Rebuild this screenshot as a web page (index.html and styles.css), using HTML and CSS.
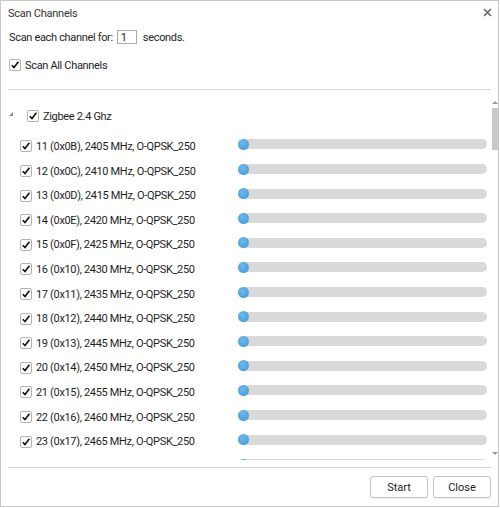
FILE: index.html
```html
<!DOCTYPE html>
<html lang="en">
  <head>
    <meta charset="UTF-8" />
    <meta name="viewport" content="width=device-width, initial-scale=1.0" />
    <title>Scan Channels</title>
    <link rel="stylesheet" href="styles.css">
  </head>
  <body>
    <div class="dialog">
      <div class="title-bar">
        <span class="title">Scan Channels</span>
        <svg class="close" width="9" height="9" viewBox="0 0 9 9">
          <path d="M1 1 L8 8 M8 1 L1 8" stroke="#666" stroke-width="1.6" />
        </svg>
      </div>

      <div class="options">
        <div class="opt-row">
          <span>Scan each channel for:</span>
          <input class="secs" type="text" value="1" />
          <span>seconds.</span>
        </div>
        <div class="opt-row opt-all">
          <span class="cb"><svg width="10" height="10" viewBox="0 0 10 10"><path d="M1.8 5.2 L4 7.6 L8.4 1.8" /></svg></span>
          <span>Scan All Channels</span>
        </div>
      </div>

      <div class="divider"></div>

      <div class="tree">
        <div class="tree-content">
          <div class="group-row">
            <span class="expander"></span>
            <span class="cb"><svg width="10" height="10" viewBox="0 0 10 10"><path d="M1.8 5.2 L4 7.6 L8.4 1.8" /></svg></span>
            <span>Zigbee 2.4 Ghz</span>
          </div>
          <div class="channels" id="channels"></div>
        </div>
        <div class="scrollbar">
          <span class="arrow up"></span>
          <span class="thumb"></span>
          <span class="track"></span>
          <span class="arrow down"></span>
        </div>
      </div>

      <div class="divider footer-line"></div>

      <div class="footer">
        <button class="btn">Start</button>
        <button class="btn">Close</button>
      </div>
    </div>

    <script>
      const list = document.getElementById("channels");
      const check = '<span class="cb"><svg width="10" height="10" viewBox="0 0 10 10"><path d="M1.8 5.2 L4 7.6 L8.4 1.8" /></svg></span>';

      // only the rows that show; the rest sit below the fold
      for (let ch = 11; ch <= 24; ch++) {
        const hex = "0x" + ch.toString(16).toUpperCase().padStart(2, "0");
        const mhz = 2405 + (ch - 11) * 5;
        const row = document.createElement("div");
        row.className = "ch-row";
        row.innerHTML =
          check +
          '<span class="ch-label">' + ch + " (" + hex + "), " + mhz + " MHz, O-QPSK_250</span>" +
          '<span class="bar"><span class="knob"></span></span>';
        list.appendChild(row);
      }
    </script>
  </body>
</html>
```

FILE: styles.css
```css
body {
  margin: 0;
  font-family: Roboto, "Liberation Sans", sans-serif;
  font-size: 11px;
  letter-spacing: -0.33px;
  color: #1e1e1e;
  background: #fff;
}

.dialog {
  width: 499px;
  height: 507px;
  box-sizing: border-box;
  border: 1px solid #c9c9c9;
  display: flex;
  flex-direction: column;
  overflow: hidden;
}

.title-bar {
  height: 24px;
  display: flex;
  align-items: center;
  justify-content: space-between;
  padding: 0 6px 0 7px;
  flex-shrink: 0;
}

.title {
  color: #333;
  letter-spacing: -0.25px;
}

.close {
  margin-top: -1px;
}

.options {
  padding: 0 8px 0 8px;
  flex-shrink: 0;
}

.opt-row {
  height: 24px;
  display: flex;
  align-items: center;
}

.opt-all {
  margin-top: 4px;
}

.opt-all .cb {
  margin-right: 4px;
}

.secs {
  width: 20px;
  height: 14px;
  box-sizing: border-box;
  margin: 0 6px 0 4px;
  padding: 0 0 0 3px;
  border: 1px solid #aaa;
  font: inherit;
  color: #222;
  outline: none;
}

.cb {
  width: 12px;
  height: 12px;
  box-sizing: border-box;
  border: 1px solid #b3b3b3;
  border-radius: 2px;
  background: #fff;
  display: flex;
  align-items: center;
  justify-content: center;
  flex-shrink: 0;
}

.cb path {
  fill: none;
  stroke: #111;
  stroke-width: 1.6;
}

.divider {
  height: 1px;
  margin: 12px 7px 0 7px;
  background: #d6d6d6;
  flex-shrink: 0;
}

.tree {
  height: 370px;
  display: flex;
  flex-shrink: 0;
}

.tree-content {
  flex: 1;
  overflow: hidden;
  padding-top: 11px;
}

.group-row {
  height: 30px;
  display: flex;
  align-items: center;
}

.expander {
  width: 0;
  height: 0;
  margin: 0 14px -1px 8px;
  position: relative;
  top: -3px;
  border-left: 4px solid transparent;
  border-bottom: 4px solid #8a8a8a;
}

.group-row .cb {
  margin-right: 4px;
}

.channels {
  padding-top: 3.2px;
}

.ch-row {
  height: 24.6px;
  display: flex;
  align-items: center;
  padding-left: 19px;
}

.ch-label {
  width: 202px;
  padding-left: 4px;
  white-space: nowrap;
}

.bar {
  width: 249px;
  height: 10px;
  margin-bottom: 4px;
  border-radius: 5px;
  background: #d9d9d9;
  display: flex;
  align-items: center;
}

.knob {
  width: 11px;
  height: 11px;
  border-radius: 50%;
  background: radial-gradient(circle at 40% 35%, #6fb8ea, #3e96d6);
}

.scrollbar {
  width: 7px;
  display: flex;
  flex-direction: column;
  align-items: center;
  padding-top: 11px;
  padding-bottom: 5px;
}

.arrow {
  width: 0;
  height: 0;
  border-left: 3px solid transparent;
  border-right: 3px solid transparent;
}

.arrow.up {
  border-bottom: 3px solid #9a9a9a;
}

.arrow.down {
  border-top: 3px solid #9a9a9a;
}

.thumb {
  width: 6px;
  height: 42px;
  margin-top: 4px;
  background: #c9c9c9;
}

.track {
  flex: 1;
}

.footer-line {
  margin-top: 7px;
}

.footer {
  display: flex;
  justify-content: flex-end;
  gap: 5px;
  padding: 8px 7px 0 0;
}

.btn {
  width: 58px;
  height: 22px;
  background: #fff;
  border: 1px solid #c4c4c4;
  border-radius: 3px;
  font: inherit;
  color: #222;
  padding: 0;
  box-shadow: 0 1px 1px rgba(0, 0, 0, 0.06);
}
```
